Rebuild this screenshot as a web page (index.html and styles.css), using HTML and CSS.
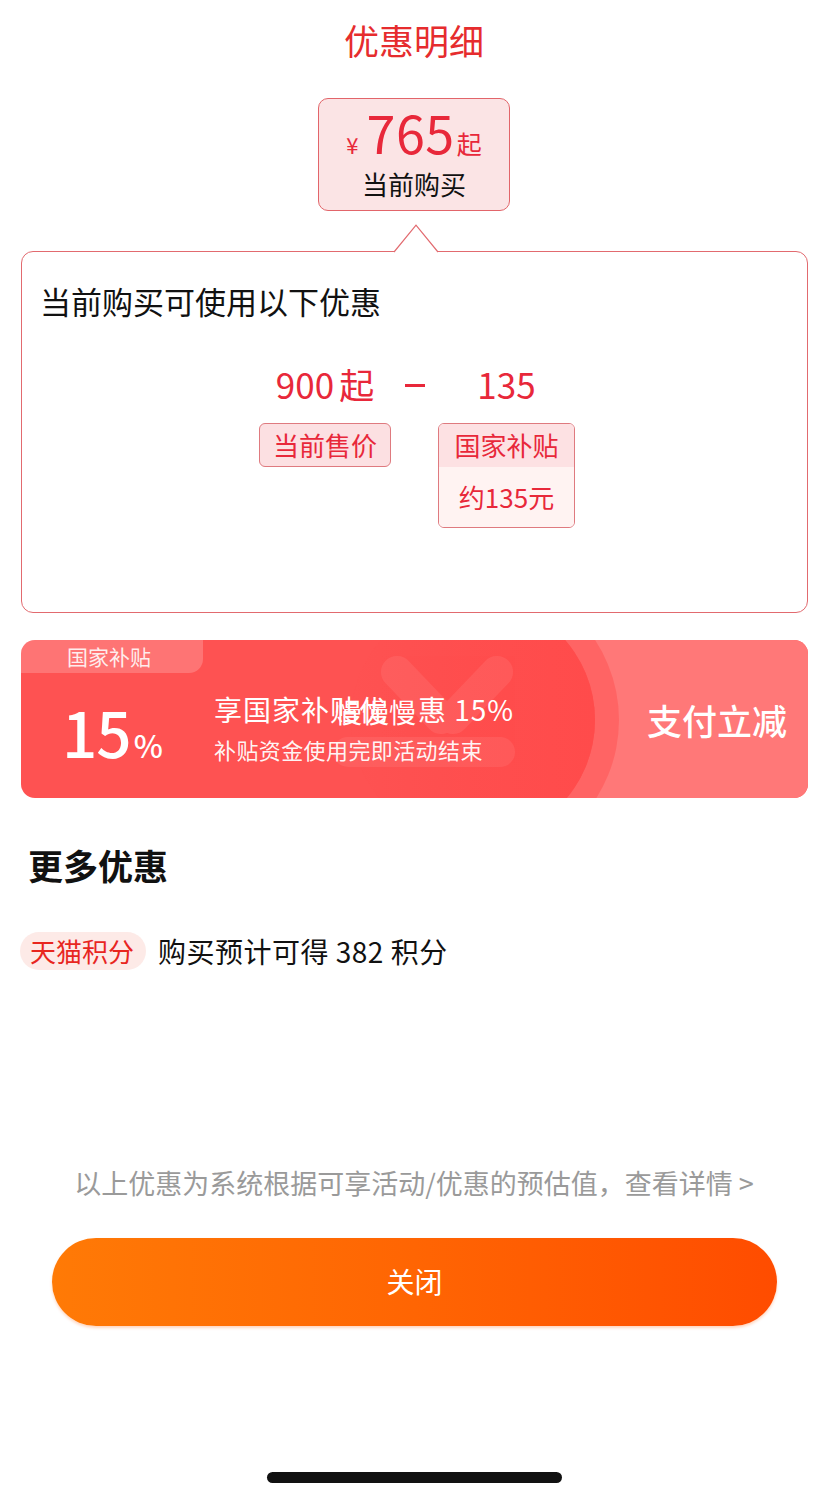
FILE: index.html
```html
<!DOCTYPE html>
<html lang="zh-CN">
<head>
<meta charset="utf-8">
<title>优惠明细</title>
<link rel="stylesheet" href="styles.css">
</head>
<body>
<div class="page">
  <h1 class="title">优惠明细</h1>

  <div class="price-box">
    <div class="price-line"><span class="yen">¥</span><span class="amount">765</span><span class="qi">起</span></div>
    <div class="price-label">当前购买</div>
  </div>

  <div class="card">
    <svg class="pointer" width="44" height="29" viewBox="0 0 44 29">
      <polygon points="0,28 22,1 44,28" fill="#fff"/>
      <polyline points="0,28 22,1.2 44,28" fill="none" stroke="#e26a6f" stroke-width="1.2"/>
    </svg>
    <div class="card-heading">当前购买可使用以下优惠</div>
    <div class="formula">
      <div class="col col-price">
        <div class="num">900<span class="num-qi">起</span></div>
        <div class="tag">当前售价</div>
      </div>
      <div class="col col-minus"><div class="num minus"><span class="minus-bar"></span></div></div>
      <div class="col col-sub">
        <div class="num">135</div>
        <div class="sub-box">
          <div class="sub-top">国家补贴</div>
          <div class="sub-bottom">约135元</div>
        </div>
      </div>
    </div>
  </div>

  <div class="banner">
    <svg class="banner-bg" width="787" height="158" viewBox="0 0 787 158">
      <defs>
        <linearGradient id="ringFade" x1="0" y1="0" x2="1" y2="0">
          <stop offset="0" stop-color="#ff6464" stop-opacity="0"/>
          <stop offset="0.55" stop-color="#ff6464" stop-opacity="0"/>
          <stop offset="0.8" stop-color="#ff6464" stop-opacity="1"/>
          <stop offset="1" stop-color="#ff6464" stop-opacity="1"/>
        </linearGradient>
        <linearGradient id="coreFade" x1="0" y1="0" x2="1" y2="0">
          <stop offset="0" stop-color="#ff4b4b" stop-opacity="0"/>
          <stop offset="0.5" stop-color="#ff4b4b" stop-opacity="0.6"/>
          <stop offset="1" stop-color="#ff4b4b" stop-opacity="1"/>
        </linearGradient>
      </defs>
      <rect x="0" y="0" width="787" height="158" fill="#fe5252"/>
      <rect x="570" y="0" width="217" height="158" fill="#ff7878"/>
      <circle cx="452" cy="80" r="146" fill="url(#ringFade)"/>
      <circle cx="452" cy="80" r="122" fill="#fe5252"/>
      <circle cx="452" cy="80" r="122" fill="url(#coreFade)"/>
      <g fill="#ffffff" opacity="0.07">
        <line x1="376" y1="32" x2="420" y2="78" stroke="#fff" stroke-width="32" stroke-linecap="round"/>
        <line x1="476" y1="32" x2="432" y2="78" stroke="#fff" stroke-width="32" stroke-linecap="round"/>
        <rect x="312" y="97" width="182" height="30" rx="15"/>
      </g>
    </svg>
    <div class="banner-main">
      <div class="banner-tab">国家补贴</div>
      <div class="banner-body">
        <div class="rate"><span class="rate-num">15</span><span class="rate-pct">%</span></div>
        <div class="banner-text">
          <div class="banner-line1">享国家补<span class="glitch">贴优<span class="glitch-over">慢慢慢</span></span>惠 15%</div>
          <div class="banner-line2">补贴资金使用完即活动结束</div>
        </div>
      </div>
    </div>
    <div class="banner-side">支付立减</div>
  </div>

  <h2 class="more-title">更多优惠</h2>

  <div class="points-row">
    <span class="points-tag">天猫积分</span>
    <span class="points-text">购买预计可得 382 积分</span>
  </div>

  <p class="note">以上优惠为系统根据可享活动/优惠的预估值，查看详情 &gt;</p>

  <button class="close-btn">关闭</button>

  <div class="home-bar"></div>
</div>
</body>
</html>
```

FILE: styles.css
```css
* { box-sizing: border-box; }

html, body {
  margin: 0;
  padding: 0;
  background: #ffffff;
}

body {
  font-family: "Noto Sans CJK SC", "Noto Sans", sans-serif;
  color: #111111;
}

.page {
  width: 828px;
  height: 1500px;
  display: flex;
  flex-direction: column;
  overflow: hidden;
}

.title {
  margin: 18px 0 0;
  text-align: center;
  font-size: 35px;
  font-weight: 400;
  line-height: 44px;
  color: #e62c2e;
}

.price-box {
  width: 192px;
  margin: 36px auto 0;
  padding: 8px 0 10px;
  background: #fbe4e5;
  border: 1px solid #e2656a;
  border-radius: 10px;
  text-align: center;
}

.price-line {
  display: flex;
  justify-content: center;
  align-items: baseline;
  height: 50px;
  line-height: 50px;
  color: #e8283a;
}

.yen {
  font-size: 22px;
  margin-right: 8px;
}

.amount {
  font-size: 52px;
  letter-spacing: 0.5px;
}

.qi {
  font-size: 25px;
  margin-left: 2px;
}

.price-label {
  margin-top: 11px;
  font-size: 26px;
  line-height: 32px;
  color: #111;
}

.card {
  position: relative;
  margin: 40px 20px 0 21px;
  padding: 28px 18px 84px;
  border: 1px solid #e26a6f;
  border-radius: 12px;
  background: #fff;
}

.pointer {
  position: absolute;
  top: -28px;
  left: 372px;
}

.card-heading {
  font-size: 31px;
  line-height: 42px;
  color: #111;
}

.formula {
  margin-top: 40px;
  display: flex;
  justify-content: center;
  align-items: flex-start;
  padding-left: 5px;
}

.col {
  display: flex;
  flex-direction: column;
  align-items: center;
}

.col-price { width: 132px; }
.col-minus { width: 20px; margin: 0 13px 0 14px; }
.col-sub { width: 137px; }

.num {
  font-size: 35px;
  line-height: 44px;
  color: #e8283a;
  white-space: nowrap;
}

.num-qi {
  margin-left: 5px;
}

.minus {
  width: 20px;
  height: 44px;
  display: flex;
  align-items: center;
}

.minus-bar {
  display: block;
  width: 20px;
  height: 3px;
  background: #e8283a;
  margin-top: 2px;
}

.tag {
  margin-top: 17px;
  width: 132px;
  height: 44px;
  line-height: 42px;
  text-align: center;
  font-size: 26px;
  color: #e8283a;
  background: #fce0e2;
  border: 1px solid #df7a7f;
  border-radius: 6px;
}

.sub-box {
  margin-top: 17px;
  width: 137px;
  border: 1px solid #df7a7f;
  border-radius: 6px;
  overflow: hidden;
  text-align: center;
  font-size: 26px;
  color: #e8283a;
}

.sub-top {
  height: 43px;
  line-height: 42px;
  background: #fde1e3;
}

.sub-bottom {
  height: 60px;
  line-height: 60px;
  background: #fff3f2;
}

.banner {
  position: relative;
  margin: 27px 20px 0 21px;
  height: 158px;
  border-radius: 14px;
  overflow: hidden;
  display: flex;
  color: #ffffff;
}

.banner-bg {
  position: absolute;
  left: 0;
  top: 0;
}

.banner-main {
  position: relative;
  flex: 1;
  display: flex;
  flex-direction: column;
}

.banner-tab {
  width: 182px;
  height: 33px;
  padding-left: 46px;
  line-height: 33px;
  font-size: 21px;
  color: rgba(255, 255, 255, 0.88);
  background: rgba(255, 255, 255, 0.2);
  border-bottom-right-radius: 14px;
}

.banner-body {
  flex: 1;
  display: flex;
  align-items: center;
  padding-bottom: 15px;
}

.rate {
  width: 193px;
  padding-left: 41px;
  padding-top: 6px;
  display: flex;
  align-items: baseline;
  font-weight: 500;
}

.rate-num {
  font-size: 62px;
  line-height: 70px;
  letter-spacing: -1px;
}

.rate-pct {
  font-size: 31px;
  margin-left: 3px;
}

.banner-line1 {
  font-size: 28px;
  line-height: 36px;
  letter-spacing: 1px;
  white-space: nowrap;
}

.glitch {
  position: relative;
  display: inline-block;
  width: 88px;
  overflow: visible;
  white-space: nowrap;
}

.glitch-over {
  position: absolute;
  left: 5px;
  top: 3px;
  font-size: 27px;
  letter-spacing: 0;
  color: #ffffff;
}

.banner-line2 {
  margin-top: 6px;
  font-size: 22px;
  line-height: 32px;
  letter-spacing: 0.4px;
  color: rgba(255, 255, 255, 0.95);
  white-space: nowrap;
}

.banner-side {
  position: relative;
  width: 208px;
  display: flex;
  align-items: center;
  padding-left: 47px;
  font-size: 35px;
  font-weight: 500;
  letter-spacing: 0;
}

.more-title {
  margin: 45px 0 0 28px;
  font-size: 35px;
  line-height: 44px;
  font-weight: 700;
  color: #111;
}

.points-row {
  margin: 45px 0 0 20px;
  display: flex;
  align-items: center;
  height: 38px;
}

.points-tag {
  height: 38px;
  line-height: 38px;
  padding: 0 12px 0 10px;
  border-radius: 19px;
  background: #fdeae7;
  color: #e8261f;
  font-size: 26px;
}

.points-text {
  margin-left: 12px;
  font-size: 28px;
  letter-spacing: 0.5px;
  color: #111;
}

.note {
  margin: 195px 0 0;
  text-align: center;
  font-size: 27px;
  line-height: 36px;
  color: #9a9a9a;
  white-space: nowrap;
}

.close-btn {
  margin: 37px 51px 0 52px;
  height: 88px;
  border: none;
  border-radius: 44px;
  background: linear-gradient(90deg, #ff7a06 0%, #ff6503 50%, #ff4c00 100%);
  color: #ffffff;
  font-family: "Noto Sans CJK SC", "Noto Sans", sans-serif;
  font-size: 28px;
  padding-bottom: 3px;
  box-shadow: 0 2px 3px rgba(255, 90, 0, 0.25);
}

.home-bar {
  margin: 146px auto 0;
  width: 295px;
  height: 11px;
  border-radius: 6px;
  background: #111111;
}
```
